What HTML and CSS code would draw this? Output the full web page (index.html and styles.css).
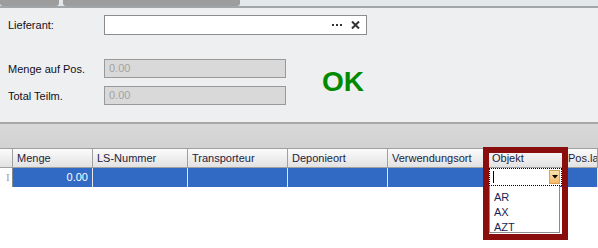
FILE: index.html
```html
<!DOCTYPE html>
<html lang="de">
<head>
  <meta charset="UTF-8" />
  <title>Lieferung</title>
  <link rel="stylesheet" href="styles.css">
</head>
<body>
  <div class="tabs">
    <div class="tab tab-first"></div>
    <div class="tab tab-second"></div>
    <div class="tab-rest"></div>
  </div>

  <div class="form">
    <div class="form-row">
      <label class="label">Lieferant:</label>
      <div class="lookup">
        <span class="lookup-btns">
          <svg width="12" height="4" viewBox="0 0 12 4"><rect x="0" y="1" width="2" height="2" fill="#333"/><rect x="4" y="1" width="2" height="2" fill="#333"/><rect x="8" y="1" width="2" height="2" fill="#333"/></svg>
          <svg width="9" height="8" viewBox="0 0 9 8"><path d="M1 0.5 L8 7.5 M8 0.5 L1 7.5" stroke="#333" stroke-width="2"/></svg>
        </span>
      </div>
    </div>

    <div class="totals">
      <div class="totals-fields">
        <div class="form-row">
          <label class="label">Menge auf Pos.</label>
          <div class="readonly">0.00</div>
        </div>
        <div class="form-row">
          <label class="label">Total Teilm.</label>
          <div class="readonly">0.00</div>
        </div>
      </div>
      <div class="ok">OK</div>
    </div>
  </div>

  <div class="band"></div>

  <div class="grid">
    <div class="grid-row grid-head">
      <div class="cell c-ind"></div>
      <div class="cell c-menge">Menge</div>
      <div class="cell c-ls">LS-Nummer</div>
      <div class="cell c-tr">Transporteur</div>
      <div class="cell c-dep">Deponieort</div>
      <div class="cell c-ver">Verwendungsort</div>
      <div class="cell c-obj">Objekt</div>
      <div class="cell c-pos">Pos.lag</div>
    </div>
    <div class="grid-row grid-data">
      <div class="cell c-ind"><span class="ibeam">I</span></div>
      <div class="cell c-menge num">0.00</div>
      <div class="cell c-ls"></div>
      <div class="cell c-tr"></div>
      <div class="cell c-dep"></div>
      <div class="cell c-ver"></div>
      <div class="cell c-obj"></div>
      <div class="cell c-pos"></div>
    </div>

    <div class="highlight"></div>
    <div class="combo">
      <span class="caret"></span>
      <span class="combo-btn">
        <svg width="6" height="4" viewBox="0 0 6 4"><path d="M0 0 H6 L3 3.5 Z" fill="#000"/></svg>
      </span>
    </div>
    <ul class="combo-list">
      <li>AR</li>
      <li>AX</li>
      <li>AZT</li>
    </ul>
  </div>
</body>
</html>
```

FILE: styles.css
```css
body {
  margin: 0;
  font-family: "Liberation Sans", Arial, sans-serif;
  font-size: 11px;
  color: #111;
  background: #fff;
  width: 598px;
  height: 248px;
  overflow: hidden;
}

.tabs {
  display: flex;
  height: 6px;
  border-bottom: 2px solid #a2a6a8;
  background: #e3e9ea;
}

.tab {
  background: #9d9d9d;
  border-radius: 0 0 3px 3px;
}

.tab-first {
  width: 59px;
}

.tab-second {
  width: 177px;
  margin-left: 4px;
}

.tab-rest {
  flex: 1;
}

.form {
  background: #eeeff1;
  padding: 7px 0 17px 8px;
  border-bottom: 2px solid #a8a8a8;
}

.form-row {
  display: flex;
  align-items: center;
}

.label {
  width: 96px;
  color: #101020;
}

.lookup {
  width: 261px;
  height: 18px;
  background: #fff;
  border: 1px solid #8c8c8c;
  display: flex;
  align-items: center;
  justify-content: flex-end;
}

.lookup-btns {
  display: flex;
  align-items: center;
  gap: 7px;
  margin-right: 6px;
}

.totals {
  display: flex;
  align-items: center;
  margin-top: 24px;
}

.totals-fields {
  display: flex;
  flex-direction: column;
  gap: 8px;
}

.readonly {
  width: 176px;
  height: 17px;
  line-height: 17px;
  padding-left: 4px;
  background: #d9d9d9;
  border: 1px solid #999;
  color: #a3a3a3;
}

.ok {
  margin-left: 36px;
  font-size: 28px;
  font-weight: bold;
  color: #008a00;
}

.band {
  height: 24px;
  background: linear-gradient(#d8d8d8, #d2d2d2);
  border-bottom: 1px solid #a0a0a0;
}

.grid {
  position: relative;
}

.grid-row {
  display: flex;
  height: 19px;
}

.cell {
  box-sizing: border-box;
  padding-left: 4px;
  line-height: 19px;
  white-space: nowrap;
  overflow: hidden;
}

.grid-head .cell {
  background: linear-gradient(#fbfbfb, #e2e2e2);
  border-right: 1px solid #a0a0a0;
  border-bottom: 1px solid #a0a0a0;
  color: #1c2340;
}

.grid-data .cell {
  background: #316ac5;
  border-right: 1px solid #e6e6e6;
  color: #fff;
}

.grid-data .c-ind {
  background: #fff;
  border-right: 1px solid #8a8a8a;
}

.ibeam {
  color: #a0a0a0;
  font-family: "Liberation Serif", serif;
  padding-left: 2px;
}

.c-ind { width: 13px; }
.c-menge { width: 80px; }
.c-ls { width: 95px; }
.c-tr { width: 100px; }
.c-dep { width: 100px; }
.c-ver { width: 100px; }
.c-obj { width: 76px; }
.c-pos { flex: 1; }

.num {
  text-align: right;
  padding-right: 4px;
}

.highlight {
  position: absolute;
  left: 483px;
  top: -2px;
  width: 73px;
  height: 81px;
  border: 6px solid #8a0e0e;
}

.combo {
  position: absolute;
  left: 489px;
  top: 19px;
  width: 71px;
  height: 16px;
  background: #fff;
  border: 1px dotted #000;
  display: flex;
  align-items: center;
  justify-content: space-between;
}

.caret {
  width: 1px;
  height: 12px;
  background: #000;
  margin-left: 3px;
}

.combo-btn {
  width: 11px;
  height: 14px;
  box-sizing: border-box;
  margin-right: 1px;
  background: linear-gradient(#fde3b0, #f2b866);
  border: 1px solid #d9a253;
  display: flex;
  align-items: center;
  justify-content: center;
}

.combo-list {
  position: absolute;
  left: 489px;
  top: 37px;
  width: 71px;
  height: 47px;
  margin: 0;
  padding: 4px 0 0 4px;
  box-sizing: border-box;
  list-style: none;
  background: #fff;
  border: 1px solid #8c8c8c;
  border-top: none;
  color: #1a1f55;
  font-size: 11px;
  line-height: 15px;
}
```
